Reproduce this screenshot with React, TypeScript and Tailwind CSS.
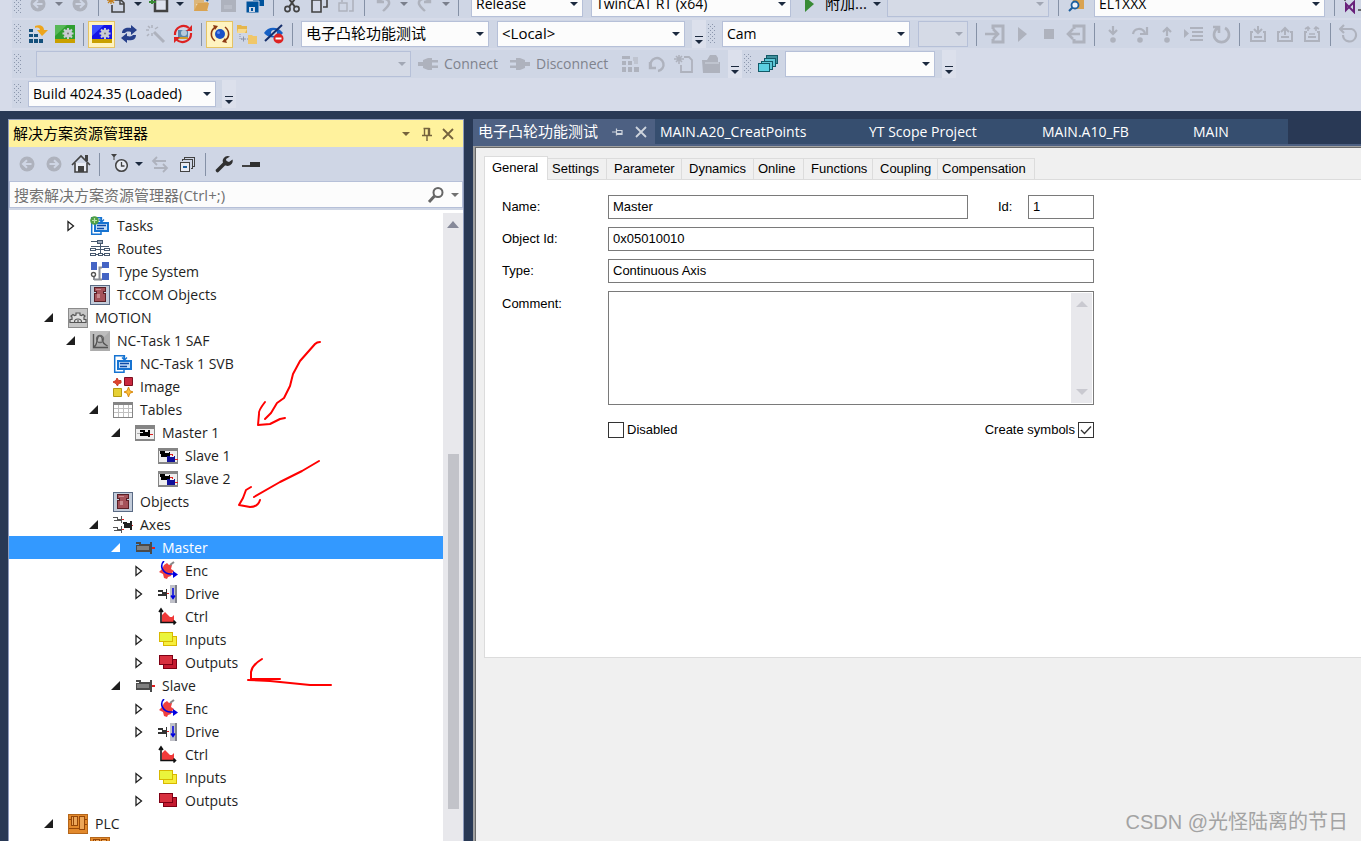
import { ReactNode, useState } from 'react'

type IconProps = { children: ReactNode; size?: number; crisp?: boolean }

function Svg({ children, size = 20, crisp = false }: IconProps) {
  return (
    <svg width={size} height={size} viewBox={`0 0 ${size} ${size}`} fill="none" className="shrink-0" shapeRendering={crisp ? 'crispEdges' : undefined} aria-hidden="true">
      {children}
    </svg>
  )
}

function Caret({ color = '#1b293e' }: { color?: string }) {
  return (
    <svg width="8" height="4" viewBox="0 0 8 4" aria-hidden="true">
      <path d="M0 0h8L4 4z" fill={color} />
    </svg>
  )
}

const gray = '#aeb2bd'

/* ---------- toolbar icons ---------- */

const ArrowCircle = ({ right = false }) => (
  <Svg>
    <circle cx="10" cy="10" r="7.5" fill={gray} />
    <path d={right ? 'M5.5 10h8M10 6.2l4 3.8-4 3.8' : 'M14.5 10h-8M10 6.2L6 10l4 3.8'} stroke="#cfd6e5" strokeWidth="2" />
  </Svg>
)

const NewProject = () => (
  <Svg>
    <path d="M8 6h6l3 3v9H5v-7" stroke="#424242" strokeWidth="1.6" />
    <path d="M13 6v4h4" stroke="#424242" strokeWidth="1.4" />
    <path d="M4 2v8M0 6h8M1 3l6 6M7 3l-6 6" stroke="#c27d1a" strokeWidth="1.3" />
  </Svg>
)

const AddItem = () => (
  <Svg>
    <rect x="6" y="5" width="12" height="12" stroke="#424242" strokeWidth="2.5" fill="#dfe3ee" />
    <path d="M3 2v8M0 8h7" stroke="#388a34" strokeWidth="2" />
  </Svg>
)

const OpenFile = () => (
  <Svg>
    <path d="M3 3h10v5h4v9H3z" fill="#dcb67a" />
    <path d="M5 10h12v6H8z" fill="#f4e3c3" />
    <path d="M3 17l4-8h11l-2 8z" fill="#d9a352" />
    <path d="M13 3l4 4" stroke="#1c5f9e" strokeWidth="2" />
  </Svg>
)

const Save = () => (
  <Svg>
    <path d="M3 2h15v16H3z" fill={gray} />
    <path d="M6 11h8v4H6z" fill="#b9bdc8" />
  </Svg>
)

const SaveAll = () => (
  <Svg>
    <path d="M8 0h11v12H8z" fill="#00539c" />
    <path d="M1 7h13v12H1z" fill="#00539c" stroke="#cfd6e5" />
    <path d="M4 13h6v5H4z" fill="#cfd6e5" />
    <path d="M6 14h2v3H6z" fill="#00539c" />
  </Svg>
)

const Cut = () => (
  <Svg>
    <path d="M5 2l8 11M15 2L7 13" stroke="#424242" strokeWidth="2" />
    <circle cx="5.5" cy="15" r="2.6" stroke="#424242" strokeWidth="1.6" />
    <circle cx="14.5" cy="15" r="2.6" stroke="#424242" strokeWidth="1.6" />
  </Svg>
)

const Copy = ({ color = '#424242' }) => (
  <Svg>
    <path d="M8 2h10v11h-4" stroke={color} strokeWidth="1.6" />
    <path d="M3 6h9v12H3z" stroke={color} strokeWidth="1.6" fill="#d6dbe9" />
  </Svg>
)

const Paste = () => (
  <Svg>
    <path d="M6 8V3h11v14h-4" stroke={gray} strokeWidth="1.6" />
    <path d="M3 9h8v8H3z" stroke={gray} strokeWidth="1.4" />
  </Svg>
)

const Undo = ({ flip = false }) => (
  <Svg>
    <path d={flip ? 'M15 2v6h-6M14 7C10 3 3 5 4 10c1 3 4 5 6 7' : 'M5 2v6h6M6 7c4-4 11-2 10 3-1 3-4 5-6 7'} stroke={gray} strokeWidth="2.4" />
  </Svg>
)

const FindInFiles = () => (
  <Svg>
    <path d="M5 1h12v14H7z" fill="#d9a352" />
    <circle cx="8" cy="11" r="3.5" fill="#eef2fa" stroke="#1c5f9e" strokeWidth="1.8" />
    <path d="M5.5 13.5L2 17" stroke="#1c5f9e" strokeWidth="2" />
  </Svg>
)

const VsIcon = () => (
  <Svg>
    <path d="M2 1v6M8 1v3h11M19 4v12h-4" stroke="#424242" strokeWidth="1.4" />
    <path d="M3 10v6l3-3zM11 8l-5 5 5 5z" stroke="#68217a" strokeWidth="2" />
  </Svg>
)

const Activate = () => (
  <Svg crisp>
    <path d="M1 5h4v3H1zM1 10h4v3H1zM6 10h4v3H6zM1 15h4v4H1zM6 15h4v4H6zM11 15h4v4h-4z" fill="#14507c" />
    <path d="M7 2c5-2 9 0 9 4h4l-6 6-5-6h3c0-2-2-3-5-2z" fill="#eda51c" shapeRendering="auto" />
  </Svg>
)

const GearGlyph = ({ color = '#c9ccd3' }) => (
  <g stroke={color} strokeWidth="2">
    <path d="M13 4v11M7.500 9.500h11M9 5.500l8 8M17 5.500l-8 8" />
    <circle cx="13" cy="9.500" r="3" fill={color} />
    <circle cx="13" cy="9.500" r="1" fill="#777" stroke="none" />
  </g>
)

const RestartMode = ({ color, fade }: { color: string; fade: string }) => (
  <Svg>
    <rect x="0" y="1" width="20" height="18" fill={color} />
    <path d="M0 12L12 1H0z" fill={fade} />
    <GearGlyph />
    <rect x="0" y="15" width="20" height="4" fill="#c9a000" />
  </Svg>
)

const Reload = () => (
  <Svg>
    <path d="M3 9c0-5 5-6 9-5V1l6 5-6 5V8c-4-1-5 0-6 1z" fill="#27408b" />
    <path d="M17 11c0 5-5 6-9 5v3l-6-5 6-5v3c4 1 5 0 6-1z" fill="#27408b" />
  </Svg>
)

const Wand = () => (
  <Svg>
    <path d="M8 8l10 10" stroke={gray} strokeWidth="3" />
    <path d="M6 1v3M6 9v3M0 6h3M9 5l3-2M2 2l2 2M3 10l-2 2" stroke={gray} strokeWidth="1.5" />
  </Svg>
)

const ToggleFreeRun = () => (
  <Svg>
    <rect x="5" y="6" width="10" height="8" fill="#5a87ad" />
    <circle cx="11" cy="9" r="3" fill="#b8cbdb" />
    <path d="M5 13h10v2H5z" fill="#cf9c2c" />
    <path d="M16 4A8.500 8.500 0 0 0 2 11M3.500 15.500A8.500 8.500 0 0 0 18 9" stroke="#dd2222" strokeWidth="2.2" />
    <path d="M19 1v6h-6zM1 19v-6h6z" fill="#dd2222" />
  </Svg>
)

const OnlineData = () => (
  <Svg>
    <circle cx="10" cy="10" r="5" fill="#1850c8" />
    <circle cx="8.500" cy="8.500" r="1.500" fill="#5f8df0" />
    <path d="M5 17C0 13 0 6 6 3M15 3c5 4 5 11-1 14" stroke="#8d3a12" strokeWidth="1.6" />
    <path d="M3 1l5 1-3 4zM17 19l-5-1 3-4z" fill="#8d3a12" />
  </Svg>
)

const FolderTree = () => (
  <Svg>
    <path d="M0 1h4l1 1h5v7H0z" fill="#e6b64c" />
    <path d="M1 5h9l-2 4H0z" fill="#f6d98d" />
    <path d="M3 10v5h4M10 15h2" stroke="#8a93a8" strokeDasharray="1 1" />
    <path d="M4 15h5M6.500 12.500v5" stroke="#8a93a8" />
    <path d="M11 11h4l1 1h4v8h-9z" fill="#f0c76a" />
  </Svg>
)

const EyeOff = () => (
  <Svg>
    <path d="M0 9c4-7 14-7 19 0-5 6-14 6-19 0z" fill="#1660c4" />
    <circle cx="10" cy="9" r="3" fill="#cfd6e5" />
    <path d="M1 17L18 1" stroke="#16306c" strokeWidth="2" />
    <circle cx="14.500" cy="14.500" r="5" fill="#dd2222" />
    <path d="M11.500 14.500h6" stroke="#fff" strokeWidth="2" />
  </Svg>
)

const Login = ({ out = false }) => (
  <Svg>
    <path d={out ? 'M8 5V2h10v16H8v-3' : 'M8 5V2h10v16H8v-3'} stroke={gray} strokeWidth="3" />
    <path d={out ? 'M14 10H3M7 5l-5 5 5 5' : 'M0 10h12M8 5l5 5-5 5'} stroke={gray} strokeWidth="2.6" />
  </Svg>
)

const Play = ({ color = gray }) => (
  <Svg>
    <path d="M6 3l9 7-9 8z" fill={color} />
  </Svg>
)

const Stop = () => (
  <Svg>
    <rect x="5" y="5" width="10" height="10" fill={gray} />
  </Svg>
)

const Step = ({ kind }: { kind: 'into' | 'over' | 'out' }) => (
  <Svg>
    <circle cx="10" cy="16" r="2.800" fill={gray} />
    {kind === 'into' && <path d="M10 2v8M6 6l4 4 4-4" stroke={gray} strokeWidth="2.2" />}
    {kind === 'out' && <path d="M10 12V4M6 8l4-4 4 4" stroke={gray} strokeWidth="2.2" />}
    {kind === 'over' && <path d="M3 10c1-6 9-7 12-1M17 3v7h-7" stroke={gray} strokeWidth="2.2" />}
  </Svg>
)

const FlowControl = () => (
  <Svg>
    <path d="M0 5l5 4.500L0 14z" fill={gray} />
    <path d="M6 4h13M8 8h11M8 12h11M6 16h13" stroke={gray} strokeWidth="1.8" />
  </Svg>
)

const Reset = () => (
  <Svg>
    <path d="M7 4a7.500 7.500 0 1 0 7 0M2 3h6v6" stroke={gray} strokeWidth="2.6" />
  </Svg>
)

const Refresh = () => (
  <Svg>
    <path d="M4 13a6.500 6.500 0 1 1 7 4M3 8v6h6" stroke={gray} strokeWidth="2.4" />
  </Svg>
)

const Force = ({ kind }: { kind: 'write' | 'force' | 'release' }) => (
  <Svg>
    <path d="M5 8H3v9h14V8h-2M6 13h8" stroke={gray} strokeWidth="2" />
    {kind === 'write' && <path d="M10 2v7M6 5l4 4 4-4" stroke={gray} strokeWidth="2" />}
    {kind === 'force' && <path d="M10 11V4M6 8l4-4 4 4" stroke={gray} strokeWidth="2" />}
    {kind === 'release' && <path d="M6 7V3M3 5l3-2 2 2M14 7V3M12 5l2-2 3 2M7 10h6" stroke={gray} strokeWidth="1.6" />}
  </Svg>
)

const Cycle = () => (
  <Svg>
    <path d="M4 11a6.500 6.500 0 1 0 9-6M1 5h12M5 1L1 5l4 4" stroke={gray} strokeWidth="2.2" />
  </Svg>
)

const Plug = ({ flip = false }) => (
  <Svg>
    <g transform={flip ? 'rotate(180 10 10)' : undefined}>
      <path d="M0 8h5v4H0zM5 6l5-2h4v12h-4l-5-2zM14 6h6v2.500h-6zM14 11.500h6V14h-6z" fill={gray} />
    </g>
  </Svg>
)

const Blocks = () => (
  <Svg crisp>
    <path d="M2 2h8v3H2zM2 7h4v4H2zM8 7h4v4H8zM2 13h4v5H2zM8 13h4v5H8zM14 13h5v5h-5z" fill={gray} />
    <path d="M13 3h5v7h-4z" fill="#bfc4d0" />
  </Svg>
)

const NewDoc = () => (
  <Svg>
    <path d="M10 3h5l3 3v12H7v-7" stroke={gray} strokeWidth="1.8" />
    <path d="M5 1v9M0 5h10M2 2l6 6M8 2L2 8" stroke={gray} strokeWidth="1.6" />
  </Svg>
)

const Folder = () => (
  <Svg>
    <path d="M1 6h5l3-5h6l2 3v4h2v11H2z" fill={gray} />
    <path d="M4 9h14" stroke="#c5cad6" strokeWidth="1.5" />
  </Svg>
)

const Cascade = () => (
  <Svg crisp>
    <path d="M8.500 1.500h11v8h-11z" fill="#3f8f9c" stroke="#125a68" />
    <path d="M6.500 4.500h11v8h-11z" fill="#5cc6d6" stroke="#125a68" />
    <path d="M3.500 7.500h11v8h-11z" fill="#5cc6d6" stroke="#125a68" />
    <path d="M.5 9.500h11v8H.5z" fill="#5cd0e2" stroke="#125a68" />
  </Svg>
)

/* ---------- explorer toolbar icons ---------- */

const Home = () => (
  <Svg>
    <path d="M1 11L10 2l9 9" stroke="#424242" strokeWidth="1.6" />
    <path d="M14 1h3v6h-3z" fill="#424242" />
    <path d="M4 9v9h12V9" stroke="#424242" strokeWidth="1.6" fill="#e8ebf3" />
    <path d="M7 12h6v6H7z" fill="#424242" />
  </Svg>
)

const PendingFilter = () => (
  <Svg>
    <path d="M3 0h6L6.500 3v3h-1V3z" fill="#424242" />
    <circle cx="13.500" cy="11.500" r="5.800" stroke="#424242" strokeWidth="1.5" fill="#e8ebf3" />
    <path d="M13.500 8v4h3" stroke="#424242" strokeWidth="1.3" />
  </Svg>
)

const Sync = () => (
  <Svg>
    <path d="M16 7H4M7 3L3 7l4 4M4 14h12M13 10l4 4-4 4" stroke={gray} strokeWidth="1.8" />
  </Svg>
)

const CollapseAll = () => (
  <Svg crisp>
    <path d="M7.500 5V3.500h10v9H16M5.500 7V5.500h10v9H14" stroke="#424242" />
    <path d="M3.500 8.500h9v9h-9z" stroke="#424242" fill="#e8ebf3" />
    <path d="M6 13h4" stroke="#1c5f9e" strokeWidth="2" />
  </Svg>
)

const Wrench = () => (
  <Svg>
    <path d="M3.500 16.500L11 9" stroke="#303030" strokeWidth="3.600" strokeLinecap="round" />
    <path d="M16 2.500a5 5 0 1 0 2.500 3L15 8l-2.500-1L12 5z" fill="#303030" />
  </Svg>
)

const Preview = () => (
  <Svg crisp>
    <path d="M1 11h9v2H1z" fill="#424242" />
    <path d="M9 8h10v5H9z" fill="#303030" />
  </Svg>
)

const Pin = () => (
  <Svg size={14}>
    <path d="M4.500 1v7M3.500 1.500h6M9.500 1v7M2 8.500h10M7 9v5M8.500 2v6" stroke="#75633d" strokeWidth="1.4" />
  </Svg>
)

const TabPin = () => (
  <Svg size={14}>
    <path d="M2 7h4M6.500 3.500v7M6 5.500h6v4H6M6 8.500h6" stroke="#ced4dd" strokeWidth="1.2" />
  </Svg>
)

const Cross = ({ color = '#75633d' }) => (
  <Svg size={14}>
    <path d="M2 2l10 10M12 2L2 12" stroke={color} strokeWidth="1.8" />
  </Svg>
)

/* ---------- tree icons ---------- */

const TaskWindow = () => (
  <>
    <path d="M11 5V1.700H1.700v16.600H11V15" stroke="#1673d1" strokeWidth="1.5" />
    <path d="M11.500 1v4M9 3.500l2.500 2.500L14 3.500" stroke="#1673d1" strokeWidth="1.3" />
    <rect x="5" y="7" width="13" height="8" fill="#c3def8" stroke="#1673d1" strokeWidth="2" />
    <path d="M7 9.500h9M7 12.500h7" stroke="#0b4aa8" strokeWidth="1.4" />
  </>
)

const treeIcons: Record<string, ReactNode> = {
  tasks: (
    <Svg>
      <TaskWindow />
      <circle cx="4.500" cy="4.500" r="4.300" fill="#4f9f45" />
      <path d="M4.500 2v5M2 4.500h5" stroke="#b9e3a8" strokeWidth="1.2" />
    </Svg>
  ),
  task: <Svg><TaskWindow /></Svg>,
  routes: (
    <Svg crisp>
      <g stroke="#46586e">
        <path d="M1 2.500h6M10.500 5v10M1 7.500h18M6 10.500h8M6 15.500h8" />
        <path d="M7.500 1.500h5v3h-5z" fill="#9aa7b8" />
        <path d="M.5 9.500h5v2h-5zM14.500 9.500h5v2h-5zM.5 14.500h5v2h-5zM14.500 14.500h5v2h-5zM8.500 14.500h4v2h-4z" fill="#fff" />
      </g>
    </Svg>
  ),
  types: (
    <Svg>
      <path d="M1 0h6v8H1zM12 0h7v6h-7zM12 11h7v7h-7z" fill="#4464c4" />
      <path d="M9.500 17V5.500H12M4 17.500h8M4 14v4" stroke="#8b8f96" strokeWidth="2" />
      <circle cx="3.500" cy="12.500" r="2" stroke="#555" strokeWidth="1.4" />
    </Svg>
  ),
  com: (
    <Svg crisp>
      <rect x=".5" y=".5" width="19" height="19" fill="#c3ccda" stroke="#5a6b85" />
      <path d="M4.500 2.500h11v4h-2v2h2v8h-11v-8h2v-2h-2z" fill="#a5525a" stroke="#5a1f26" />
      <path d="M6 4h5v1H6zM7 9h3v4H7z" fill="#c98a8f" />
    </Svg>
  ),
  motion: (
    <Svg>
      <rect x=".5" y=".5" width="19" height="19" fill="#c6c6c6" stroke="#8b8b8b" />
      <path d="M2 14.500v-3h2V9l-1-1 2-1.500L6.500 7.500 8 7V5h4v2l1.500.5L15 6.500 17 8l-1 1v2.500h2v3z" stroke="#555" strokeWidth="1.2" fill="#dedede" />
      <path d="M6.500 14c0-4 7-4 7 0M10 12v2" stroke="#555" strokeWidth="1.2" />
    </Svg>
  ),
  saf: (
    <Svg>
      <rect x="0" y="0" width="20" height="20" fill="#acacac" />
      <path d="M0 20L20 0H0z" fill="#bdbdbd" />
      <path d="M3.500 3v13.500H18M3.500 16c4-1 3-8 5-11 3-1 4 2 4 5 1 3 2 3 5 5" stroke="#555" strokeWidth="1.4" />
      <circle cx="10" cy="8" r="3.500" stroke="#666" strokeWidth="1.3" />
    </Svg>
  ),
  image: (
    <Svg>
      <path d="M4 1l1.500 2.500H8V6L5.500 6.500 4.500 9 3 6.500 0 5l3-1.500z" fill="#e0442c" stroke="#c83a24" />
      <path d="M11.500.5h8v8h-8z" fill="#c9283e" stroke="#7c0f20" />
      <path d="M.5 11.500h8v8h-8z" fill="#e6d034" stroke="#b39a12" />
      <path d="M15.500 10l1.300 3.700 3.200 1.300-3.200 1.300-1.300 3.700-1.300-3.700L11 15l3.200-1.300z" fill="#ffc03a" stroke="#d88a10" />
    </Svg>
  ),
  tables: (
    <Svg crisp>
      <path d="M.5 2.500h19v15H.5z" fill="#fff" stroke="#858585" />
      <path d="M0 2h20v3H0zM0 17h20v1H0z" fill="#858585" />
      <path d="M1 8.500h18M1 12.500h18M5.500 5v12M10.500 5v12M15.500 5v12" stroke="#c0c0c0" />
    </Svg>
  ),
  camMaster: (
    <Svg crisp>
      <path d="M.5 2.500h19v15H.5z" fill="#eee" stroke="#858585" />
      <path d="M0 2h20v4H0zM0 16h20v2H0z" fill="#858585" />
      <path d="M5 7h5v2h3V7h2v7h-2v-1H5v-3h3V9H5z" fill="#000" />
      <path d="M2 10.500h3" stroke="#aaa" />
      <path d="M15 11.500h3" stroke="#e02020" />
    </Svg>
  ),
  camSlave: (
    <Svg crisp>
      <path d="M.5 2.500h19v15H.5z" fill="#eee" stroke="#858585" />
      <path d="M0 2h20v3H0zM0 16h20v2H0z" fill="#858585" />
      <path d="M2 5h5v2h4V6h1v5H3V8H2z" fill="#000" />
      <path d="M9 10h3v1h4v-1h1v6H9z" fill="#10109a" />
      <path d="M12 8h2v2M17 13.500h3" stroke="#e02020" />
    </Svg>
  ),
  axes: (
    <Svg crisp>
      <path d="M0 2h5v2h3V1h1v7H8V6H1V5h3V3H0zM0 12h5v2h3v-3h1v7H8v-2H1v-1h3v-2H0z" fill="#555" />
      <path d="M10 7h4v1h3V6h2v9h-2v-2h-6V9h-1z" fill="#222" />
      <path d="M9 4.500h2M9 14.500h2M19 10.500h1" stroke="#e02020" />
    </Svg>
  ),
  axis: (
    <Svg crisp>
      <path d="M1 4h5v2h9V4h2v12h-2v-2H1V7h3V6H1z" fill="#4a4a4a" />
      <path d="M2 8h12v4H2z" fill="#808080" />
      <path d="M17 10h3" stroke="#e02020" strokeWidth="2" />
    </Svg>
  ),
  enc: (
    <Svg>
      <path d="M6 4l3-2 2 2h3l-1 4 3 2-2 2-1 3-3 1-1 2-3-1-1-4-4-2 3-3z" fill="#f04040" />
      <path d="M12 4l4-3" stroke="#888" strokeWidth="2" />
      <path d="M6 0c-5 5-1 13 7 13h3" stroke="#0000e0" strokeWidth="1.6" />
      <path d="M15 10l5 3.500-5 3.500z" fill="#0000e0" />
    </Svg>
  ),
  drive: (
    <Svg crisp>
      <path d="M0 6h5v2h3V5h1v10H8v-3H0v-2h4V8H0z" fill="#333" />
      <path d="M9 9.500h2" stroke="#e02020" />
      <path d="M12 1h7v18h-7z" fill="#bfc0c8" />
      <path d="M17 1h2v18h-2z" fill="#80828c" />
      <path d="M15 4v10M13 11.500l2 3 2-3" stroke="#0000e0" strokeWidth="1.5" shapeRendering="auto" />
    </Svg>
  ),
  ctrl: (
    <Svg>
      <path d="M4 15V8l3-3 5 5h2l2-2v7z" fill="#f03a3a" />
      <path d="M3 3v12.500h14M1 5l2-3 2 3M15.500 13.500l2 2-2 2" stroke="#111" strokeWidth="1.6" />
    </Svg>
  ),
  inputs: (
    <Svg crisp>
      <path d="M5.500 6.500h13v9h-13z" fill="#f7ee3c" stroke="#d8b800" />
      <path d="M1.500 2.500h13v9h-13z" fill="#eaf53c" stroke="#d8b800" />
    </Svg>
  ),
  outputs: (
    <Svg crisp>
      <path d="M5.500 6.500h13v9h-13z" fill="#c41a30" stroke="#7e0014" />
      <path d="M1.500 2.500h13v9h-13z" fill="#d8303f" stroke="#7e0014" />
    </Svg>
  ),
  plc: (
    <Svg crisp>
      <rect x=".5" y=".5" width="19" height="19" fill="#e2892c" stroke="#b5661a" />
      <path d="M3.500 2.500h6v9h-6zM11.500 2.500h5v13h-5z" fill="#eca75a" stroke="#964708" />
      <path d="M5.500 2v9M1 5.500h2M1 14.500h10M17 5.500h2M17 10.500h2" stroke="#964708" />
    </Svg>
  ),
}

/* ---------- toolbar building blocks ---------- */

function Tool({ label, children, active = false }: { label: string; children: ReactNode; active?: boolean }) {
  return (
    <button
      type="button"
      aria-label={label}
      className={`flex h-[27px] w-[27px] shrink-0 items-center justify-center ${active ? 'border border-[#e5c365] bg-[#fff3c0]' : ''}`}
    >
      {children}
    </button>
  )
}

function CaretButton({ label, muted = false }: { label: string; muted?: boolean }) {
  return (
    <button type="button" aria-label={label} className="flex h-[27px] w-[15px] shrink-0 items-center justify-center">
      <Caret color={muted ? '#7a7f8c' : '#1b293e'} />
    </button>
  )
}

function Separator() {
  return (
    <div className="flex w-[10px] shrink-0 justify-center">
      <div className="h-[23px] w-px bg-[#8591a6]" />
    </div>
  )
}

function Grip() {
  return (
    <div className="flex w-3 shrink-0 items-center pl-[2px]">
      <svg width="7" height="20" viewBox="0 0 7 20" fill="#8c97ad" shapeRendering="crispEdges" aria-hidden="true">
        {[0, 4, 8, 12, 16].map(y => (
          <path key={y} d={`M0 ${y}h1v1H0zM4 ${y}h1v1H4zM2 ${y + 2}h1v1H2zM6 ${y + 2}h1v1H6z`} />
        ))}
      </svg>
    </div>
  )
}

function Overflow() {
  return (
    <button type="button" aria-label="Toolbar options" className="flex h-7 w-[14px] shrink-0 flex-col items-center justify-end gap-[3px] bg-[#dce0ec] pb-1">
      <span className="h-px w-2 bg-[#1b293e]" />
      <Caret />
    </button>
  )
}

function Combo({ label, value = '', width, disabled = false }: { label: string; value?: string; width: string; disabled?: boolean }) {
  return (
    <div className={`relative flex h-[26px] shrink-0 items-center ${width}`}>
      <select
        aria-label={label}
        disabled={disabled}
        className={`h-full w-full appearance-none border border-[#b6c0d8] pl-1 pr-5 text-black outline-none ${disabled ? 'bg-[#d5dae6]' : 'bg-[#fcfcfc]'}`}
      >
        <option>{value}</option>
      </select>
      <span className="pointer-events-none absolute right-[5px]">
        <Caret color={disabled ? '#a2a7b4' : '#1b293e'} />
      </span>
    </div>
  )
}

function Strip({ children, grow = false }: { children: ReactNode; grow?: boolean }) {
  return <div className={`flex h-7 items-center bg-[#cfd6e5] ${grow ? 'grow' : 'shrink-0'}`}>{children}</div>
}

function Toolbars() {
  return (
    <header className="flex h-[111px] shrink-0 flex-col gap-[2px] overflow-hidden bg-[#d6dbe9] pl-3">
      {/* the first bar is scrolled partly out of the window */}
      <div className="-mt-[10px] flex shrink-0">
        <Strip grow>
          <Grip />
          <Tool label="Back"><ArrowCircle /></Tool>
          <CaretButton label="Back history" muted />
          <Tool label="Forward"><ArrowCircle right /></Tool>
          <Separator />
          <Tool label="New project"><NewProject /></Tool>
          <CaretButton label="New project options" />
          <Tool label="Add item"><AddItem /></Tool>
          <CaretButton label="Add item options" />
          <Tool label="Open"><OpenFile /></Tool>
          <Tool label="Save"><Save /></Tool>
          <Tool label="Save all"><SaveAll /></Tool>
          <Separator />
          <Tool label="Cut"><Cut /></Tool>
          <Tool label="Copy"><Copy /></Tool>
          <Tool label="Paste"><Paste /></Tool>
          <Separator />
          <Tool label="Undo"><Undo /></Tool>
          <CaretButton label="Undo history" muted />
          <Tool label="Redo"><Undo flip /></Tool>
          <CaretButton label="Redo history" muted />
          <Separator />
          <div className="ml-2 flex items-center gap-2">
            <Combo label="Solution configuration" value="Release" width="w-[112px]" />
            <Combo label="Solution platform" value="TwinCAT RT (x64)" width="w-[200px]" />
          </div>
          <button type="button" className="ml-2 flex w-[88px] shrink-0 items-center gap-[6px] text-[15px]">
            <Play color="#388a34" />
            <span className="whitespace-nowrap">附加...</span>
            <Caret />
          </button>
          <Combo label="Target" width="w-[162px]" disabled />
          <div className="ml-1 flex items-center">
            <Separator />
          </div>
          <Tool label="Find in files"><FindInFiles /></Tool>
          <div className="ml-1 mr-1 flex">
            <Combo label="Find" value="EL1XXX" width="w-[231px]" />
          </div>
          <Separator />
          <Tool label="Extensions"><VsIcon /></Tool>
        </Strip>
      </div>

      <div className="flex shrink-0">
        <Strip>
          <Grip />
          <Tool label="Activate configuration"><Activate /></Tool>
          <Tool label="Restart in run mode"><RestartMode color="#2f9e2f" fade="#57b857" /></Tool>
          <Separator />
          <Tool label="Restart in config mode" active><RestartMode color="#1414e6" fade="#3c50ff" /></Tool>
          <Tool label="Reload devices"><Reload /></Tool>
          <Tool label="Scan"><Wand /></Tool>
          <Tool label="Toggle free run"><ToggleFreeRun /></Tool>
          <Separator />
          <Tool label="Show online data" active><OnlineData /></Tool>
          <Tool label="Show sub items"><FolderTree /></Tool>
          <Tool label="Hide disabled items"><EyeOff /></Tool>
          <Separator />
          <div className="ml-1 mr-[7px] flex items-center gap-2 text-[15px]">
            <Combo label="Project" value="电子凸轮功能测试" width="w-[188px]" />
            <Combo label="Target system" value="<Local>" width="w-[188px]" />
          </div>
        </Strip>
        <Overflow />
        <Strip grow>
          <Grip />
          <div className="ml-1 mr-[3px] flex items-center gap-2">
            <Combo label="PLC project" value="Cam" width="w-[188px]" />
            <Combo label="Instance" width="w-[50px]" disabled />
          </div>
          <Separator />
          <Tool label="Login"><Login /></Tool>
          <Tool label="Start"><Play /></Tool>
          <Tool label="Stop"><Stop /></Tool>
          <Tool label="Logout"><Login out /></Tool>
          <Separator />
          <Tool label="Step into"><Step kind="into" /></Tool>
          <Tool label="Step over"><Step kind="over" /></Tool>
          <Tool label="Step out"><Step kind="out" /></Tool>
          <Tool label="Flow control"><FlowControl /></Tool>
          <Tool label="Reset"><Reset /></Tool>
          <Separator />
          <Tool label="Write values"><Force kind="write" /></Tool>
          <Tool label="Force values"><Force kind="force" /></Tool>
          <Tool label="Unforce values"><Force kind="release" /></Tool>
          <Separator />
          <Tool label="Single cycle"><Cycle /></Tool>
        </Strip>
      </div>

      <div className="flex shrink-0 text-[#7f838d]">
        <Strip>
          <Grip />
          <div className="ml-3 mr-[7px] flex">
            <Combo label="Connection" width="w-[375px]" disabled />
          </div>
          <button type="button" className="flex w-[92px] items-center gap-[6px]"><Plug />Connect</button>
          <button type="button" className="flex w-[106px] items-center gap-[6px]"><Plug flip />Disconnect</button>
          <Tool label="Target browser"><Blocks /></Tool>
          <Tool label="Refresh"><Refresh /></Tool>
          <Tool label="New document"><NewDoc /></Tool>
          <Tool label="Open folder"><Folder /></Tool>
          <div className="w-1" />
        </Strip>
        <Overflow />
        <Strip>
          <Grip />
          <Tool label="Windows"><Cascade /></Tool>
          <div className="ml-1 mr-[7px] flex">
            <Combo label="Window layout" width="w-[150px]" />
          </div>
        </Strip>
        <Overflow />
      </div>

      <div className="flex shrink-0">
        <Strip>
          <Grip />
          <div className="ml-1 mr-[6px] flex">
            <Combo label="TwinCAT build" value="Build 4024.35 (Loaded)" width="w-[188px]" />
          </div>
        </Strip>
        <Overflow />
      </div>
    </header>
  )
}

/* ---------- solution explorer ---------- */

type Node = { label: string; icon: string; level: number; state?: 'open' | 'closed' }

const axisChildren: Node[] = [
  { label: 'Enc', icon: 'enc', level: 4, state: 'closed' },
  { label: 'Drive', icon: 'drive', level: 4, state: 'closed' },
  { label: 'Ctrl', icon: 'ctrl', level: 4 },
  { label: 'Inputs', icon: 'inputs', level: 4, state: 'closed' },
  { label: 'Outputs', icon: 'outputs', level: 4, state: 'closed' },
]

const nodes: Node[] = [
  { label: 'Tasks', icon: 'tasks', level: 1, state: 'closed' },
  { label: 'Routes', icon: 'routes', level: 1 },
  { label: 'Type System', icon: 'types', level: 1 },
  { label: 'TcCOM Objects', icon: 'com', level: 1 },
  { label: 'MOTION', icon: 'motion', level: 0, state: 'open' },
  { label: 'NC-Task 1 SAF', icon: 'saf', level: 1, state: 'open' },
  { label: 'NC-Task 1 SVB', icon: 'task', level: 2 },
  { label: 'Image', icon: 'image', level: 2 },
  { label: 'Tables', icon: 'tables', level: 2, state: 'open' },
  { label: 'Master 1', icon: 'camMaster', level: 3, state: 'open' },
  { label: 'Slave 1', icon: 'camSlave', level: 4 },
  { label: 'Slave 2', icon: 'camSlave', level: 4 },
  { label: 'Objects', icon: 'com', level: 2 },
  { label: 'Axes', icon: 'axes', level: 2, state: 'open' },
  { label: 'Master', icon: 'axis', level: 3, state: 'open' },
  ...axisChildren,
  { label: 'Slave', icon: 'axis', level: 3, state: 'open' },
  ...axisChildren,
  { label: 'PLC', icon: 'plc', level: 0, state: 'open' },
  { label: '', icon: 'plc', level: 1 },
]

const indent = ['pl-[29px]', 'pl-[51px]', 'pl-[74px]', 'pl-[96px]', 'pl-[119px]']

function Expander({ state, selected }: { state?: 'open' | 'closed'; selected: boolean }) {
  return (
    <span className="flex w-[21px] justify-center">
      {state === 'open' && (
        <svg width="9" height="9" viewBox="0 0 9 9" aria-hidden="true"><path d="M9 0v9H0z" fill={selected ? '#fff' : '#1e1e1e'} /></svg>
      )}
      {state === 'closed' && (
        <svg width="8" height="12" viewBox="0 0 8 12" aria-hidden="true"><path d="M1 1.500v9L6.500 6z" fill="#fff" stroke="#1e1e1e" strokeWidth="1.3" /></svg>
      )}
    </span>
  )
}

function SolutionExplorer() {
  const [selected, setSelected] = useState(14)

  return (
    <aside className="ml-2 mt-2 flex w-[456px] shrink-0 flex-col border border-b-0 border-[#8e9bbc] bg-[#cfd6e5]">
      <div className="flex h-[27px] shrink-0 items-center bg-[#fff29d] pl-1 pr-2">
        <h2 className="grow text-[15px]">解决方案资源管理器</h2>
        <div className="flex items-center gap-[7px]">
          <button type="button" aria-label="Window position" className="flex w-[14px] justify-center"><Caret color="#75633d" /></button>
          <button type="button" aria-label="Auto hide"><Pin /></button>
          <button type="button" aria-label="Close"><Cross /></button>
        </div>
      </div>

      <div className="flex h-[34px] shrink-0 items-center pl-1">
        <Tool label="Back"><ArrowCircle /></Tool>
        <Tool label="Forward"><ArrowCircle right /></Tool>
        <Tool label="Home"><Home /></Tool>
        <Separator />
        <Tool label="Pending changes filter"><PendingFilter /></Tool>
        <CaretButton label="Filter options" />
        <Tool label="Sync with active document"><Sync /></Tool>
        <Tool label="Collapse all"><CollapseAll /></Tool>
        <Separator />
        <Tool label="Properties"><Wrench /></Tool>
        <Tool label="Preview selected items"><Preview /></Tool>
      </div>

      <div className="mb-[2px] flex h-[27px] shrink-0 items-center gap-[6px] border border-[#b6c0d8] bg-[#fcfcfc] pr-[3px]">
        <input
          type="search"
          aria-label="Search"
          placeholder="搜索解决方案资源管理器(Ctrl+;)"
          className="h-full min-w-0 grow bg-transparent pl-1 text-[15px] outline-none placeholder:text-[#717171]"
        />
        <button type="button" aria-label="Start search">
          <Svg size={18}>
            <circle cx="11" cy="6.500" r="4.500" stroke="#666" strokeWidth="2" />
            <path d="M7.500 10L2 16" stroke="#666" strokeWidth="3" />
          </Svg>
        </button>
        <button type="button" aria-label="Search options"><Caret color="#717171" /></button>
      </div>

      <div className="flex min-h-0 grow overflow-hidden bg-white">
        <ul className="min-w-0 grow pt-1">
          {nodes.map((node, i) => (
            <li key={i}>
              <button
                type="button"
                onClick={() => setSelected(i)}
                className={`flex h-[23px] w-full items-center ${indent[node.level]} ${selected === i ? 'bg-[#3399ff] text-white' : 'text-[#1e1e1e]'}`}
              >
                <Expander state={node.state} selected={selected === i} />
                <span className="ml-[9px] mr-[7px]">{treeIcons[node.icon]}</span>
                {node.label}
              </button>
            </li>
          ))}
        </ul>
        <div className="mt-[3px] flex w-5 shrink-0 flex-col items-center bg-[#e8e8ec] pt-2">
          <svg width="12" height="7" viewBox="0 0 12 7" className="shrink-0" aria-hidden="true"><path d="M6 0l6 7H0z" fill="#868999" /></svg>
          <div className="mt-[226px] h-[355px] w-[11px] shrink-0 bg-[#c2c3c9]" />
        </div>
      </div>
    </aside>
  )
}

/* ---------- document area ---------- */

const documents = [
  { label: 'MAIN.A20_CreatPoints', width: 'w-[209px]' },
  { label: 'YT Scope Project', width: 'w-[173px]' },
  { label: 'MAIN.A10_FB', width: 'w-[151px]' },
  { label: 'MAIN', width: 'w-[100px]' },
]

const pages = [
  { label: 'General', width: 'w-[64px] pl-[7px]' },
  { label: 'Settings', width: 'w-[59px] pl-1' },
  { label: 'Parameter', width: 'w-[75px] pl-[7px]' },
  { label: 'Dynamics', width: 'w-[72px] pl-[7px]' },
  { label: 'Online', width: 'w-[50px] pl-1' },
  { label: 'Functions', width: 'w-[69px] pl-[7px]' },
  { label: 'Coupling', width: 'w-[65px] pl-[7px]' },
  { label: 'Compensation', width: 'w-[97px] pl-1' },
]

const field = 'h-6 border border-[#7a7a7a] bg-white px-1 pb-[2px] outline-none'

function GeneralPage() {
  const [disabled, setDisabled] = useState(false)
  const [symbols, setSymbols] = useState(true)

  return (
    <form className="flex w-[609px] flex-col gap-2 pl-[17px] pt-[15px]">
      <div className="flex items-center">
        <label htmlFor="name" className="w-[106px]">Name:</label>
        <input id="name" defaultValue="Master" className={`${field} min-w-0 grow`} />
        <label htmlFor="axis-id" className="w-[60px] pl-[30px]">Id:</label>
        <input id="axis-id" defaultValue="1" className={`${field} w-[66px]`} />
      </div>
      <div className="flex items-center">
        <label htmlFor="object-id" className="w-[106px]">Object Id:</label>
        <input id="object-id" defaultValue="0x05010010" className={`${field} grow`} />
      </div>
      <div className="flex items-center">
        <label htmlFor="type" className="w-[106px]">Type:</label>
        <input id="type" defaultValue="Continuous Axis" className={`${field} grow`} />
      </div>
      <div className="flex items-start">
        <label htmlFor="comment" className="w-[106px] pt-1">Comment:</label>
        <div className="flex h-[114px] grow border border-[#7a7a7a] bg-white p-px">
          <textarea id="comment" className="h-full min-w-0 grow resize-none outline-none" />
          <div className="flex w-[21px] flex-col items-center justify-between bg-[#e8e8ec] py-2">
            <svg width="12" height="6" viewBox="0 0 12 6" aria-hidden="true"><path d="M6 0l6 6H0z" fill="#c9c9d0" /></svg>
            <svg width="12" height="6" viewBox="0 0 12 6" aria-hidden="true"><path d="M6 6l6-6H0z" fill="#c9c9d0" /></svg>
          </div>
        </div>
      </div>
      <div className="mt-2 flex items-center justify-between pl-[106px]">
        <label className="flex items-center gap-[3px]">
          <CheckBox checked={disabled} onChange={setDisabled} />
          Disabled
        </label>
        <label className="flex items-center gap-[3px]">
          Create symbols
          <CheckBox checked={symbols} onChange={setSymbols} />
        </label>
      </div>
    </form>
  )
}

function CheckBox({ checked, onChange }: { checked: boolean; onChange: (value: boolean) => void }) {
  return (
    <span className="relative flex h-4 w-4">
      <input
        type="checkbox"
        checked={checked}
        onChange={e => onChange(e.target.checked)}
        className="h-4 w-4 appearance-none border border-[#333333] bg-white"
      />
      {checked && (
        <svg width="16" height="16" viewBox="0 0 16 16" fill="none" className="pointer-events-none absolute inset-0" aria-hidden="true">
          <path d="M3 8l3.500 3.500L13 4.500" stroke="#333" strokeWidth="1.3" />
        </svg>
      )}
    </span>
  )
}

function DocumentArea() {
  const [page, setPage] = useState(0)

  return (
    <main className="ml-[9px] mt-2 flex min-w-0 grow flex-col">
      <div className="flex h-[25px] shrink-0 text-white">
        <div className="flex w-[182px] shrink-0 items-center bg-[#4d6082] pl-[5px] pr-[7px]">
          <button type="button" className="grow text-left text-[15px] whitespace-nowrap">电子凸轮功能测试</button>
          <div className="flex items-center gap-[10px]">
            <button type="button" aria-label="Pin tab"><TabPin /></button>
            <button type="button" aria-label="Close tab"><Cross color="#ced4dd" /></button>
          </div>
        </div>
        {documents.map(doc => (
          <button key={doc.label} type="button" className={`bg-[#364e6f] pl-[5px] text-left whitespace-nowrap ${doc.width}`}>
            {doc.label}
          </button>
        ))}
      </div>
      <div className="h-[2px] shrink-0 bg-[#4d6082]" />

      <div className="flex min-h-0 grow border-l-2 border-t border-[#a0a0a0]">
        <div className="flex min-w-0 grow flex-col overflow-hidden border-l border-t border-[#696969] bg-[#f0f0f0] pl-2 pt-2 font-['Liberation_Sans',Arial,sans-serif] text-[13px] text-black">
          <div className="flex items-end" role="tablist">
            {pages.map((p, i) => (
              <button
                key={p.label}
                type="button"
                role="tab"
                aria-selected={page === i}
                onClick={() => setPage(i)}
                className={`border-r border-t border-[#dcdcdc] text-left ${p.width} ${page === i ? 'h-6 border-l bg-white' : 'h-[22px] border-b bg-[#f0f0f0]'}`}
              >
                {p.label}
              </button>
            ))}
            <div className="h-px grow bg-[#dcdcdc]" />
          </div>
          <div className="h-[478px] shrink-0 border-b border-l border-[#dcdcdc] bg-white">
            {page === 0 && <GeneralPage />}
          </div>
        </div>
      </div>
    </main>
  )
}

/* hand-drawn pen marks lying over the tree */
function PenMarks() {
  return (
    <svg
      width="110" height="360" viewBox="230 335 110 360" fill="none"
      stroke="#ff0000" strokeWidth="2" strokeLinecap="round" strokeLinejoin="round"
      className="pointer-events-none absolute left-[230px] top-[335px]" aria-hidden="true"
    >
      <path d="M320 342q-3 0-5 2l-15 17-7 13-3 12-6 12-7 5-6 10-6 6M265 402q-7 9-6 12l-1 11 12-1 10-5 5-1" />
      <path d="M319 461l-17 10-22 11-26 15M251 487l-5 3-3 8-4 7 11 2q8 0 10-7" />
      <path d="M262 659q-10 6-11 13v7h29M248 680l22 1 30 3 10 1h21" />
    </svg>
  )
}

export default function App() {
  return (
    <div className="relative flex h-screen flex-col overflow-hidden bg-[#293955] font-['Open_Sans','Noto_Sans_CJK_SC',sans-serif] text-sm text-black">
      <Toolbars />
      <div className="flex min-h-0 grow">
        <SolutionExplorer />
        <DocumentArea />
      </div>
      <PenMarks />
      <p className="pointer-events-none absolute bottom-1 right-[13px] font-['Liberation_Sans','Noto_Sans_CJK_SC',sans-serif] text-[20px] leading-[30px] text-[#a3a3a3]">CSDN @光怪陆离的节日</p>
    </div>
  )
}
